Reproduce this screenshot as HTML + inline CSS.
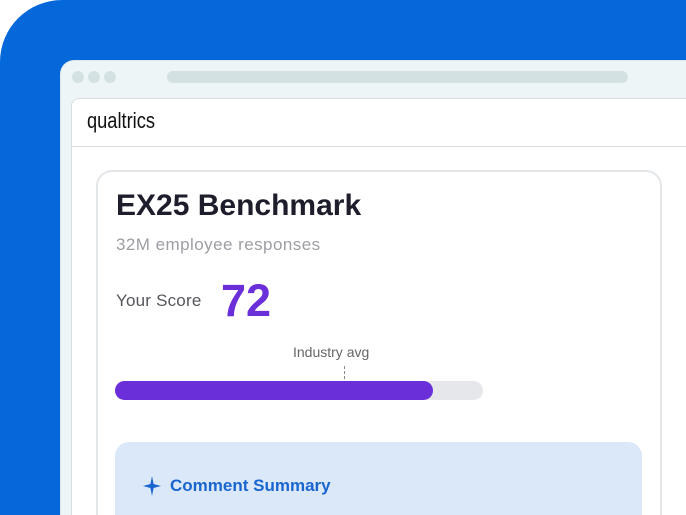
<!DOCTYPE html>
<html style="width:686px;height:515px;overflow:hidden"><head><style>
*{margin:0;padding:0;box-sizing:border-box}
body{width:686px;height:515px;overflow:hidden;background:#fff;position:relative;font-family:"Liberation Sans",Arial,sans-serif}
.bg{position:absolute;left:0;top:0;width:686px;height:515px;background:#0468DB;border-top-left-radius:62px}
.frame{position:absolute;left:60px;top:60px;width:626px;height:455px;background:#EDF5F7;border-top-left-radius:14px;border:1px solid #dde8ea;border-right:none;border-bottom:none}
.dot{position:absolute;top:10px;width:12px;height:12px;border-radius:50%;background:#D3E1E3}
.addr{position:absolute;left:106px;top:10px;width:461px;height:12px;border-radius:6px;background:#D3E1E3}
.win{position:absolute;left:71px;top:98px;width:615px;height:417px;background:#fff;border:1px solid #d6dee0;border-top-left-radius:8px;border-right:none;border-bottom:none}
.hdr{position:absolute;left:0;top:0;right:0;height:48px;border-bottom:1px solid #d6dee0}
.logo{position:absolute;left:15px;top:9px;font-size:22px;color:#111;transform:scaleX(0.83);transform-origin:left}
.card{position:absolute;left:96px;top:170px;width:566px;height:345px;border:2px solid #e4e7ea;border-bottom:none;border-radius:16px 16px 0 0;background:#fff}
.t{position:absolute;font-family:"Liberation Sans",Arial,sans-serif;white-space:nowrap}
</style></head><body>
<div class="bg"></div>
<div class="frame">
<div class="dot" style="left:11px"></div><div class="dot" style="left:27px"></div><div class="dot" style="left:43px"></div>
<div class="addr"></div>
</div>
<div class="win"><div class="hdr"><div class="logo">qualtrics</div></div></div>
<div class="card"></div>
<div class="t" style="left:116px;top:189px;font-size:30px;font-weight:bold;color:#1d1d2c">EX25 Benchmark</div>
<div class="t" style="left:116px;top:235px;font-size:17px;color:#9c9ea4;letter-spacing:0.45px">32M employee responses</div>
<div class="t" style="left:116px;top:291px;font-size:17px;color:#55575c;letter-spacing:0.2px">Your Score</div>
<div class="t" style="left:221px;top:275px;font-size:45px;font-weight:bold;color:#6A2FD8">72</div>
<div class="t" style="left:293px;top:344px;font-size:14px;color:#666">Industry avg</div>
<div style="position:absolute;left:344px;top:366px;height:13px;border-left:1px dashed #888"></div>
<div style="position:absolute;left:115px;top:381px;width:368px;height:19px;border-radius:10px;background:#E5E7EA"></div>
<div style="position:absolute;left:115px;top:381px;width:318px;height:19px;border-radius:10px;background:#6A2FD8"></div>
<div style="position:absolute;left:115px;top:442px;width:527px;height:73px;border-radius:14px 14px 0 0;background:#DAE8FA"></div>
<svg style="position:absolute;left:143px;top:476px" width="18" height="20" viewBox="0 0 18 20"><path d="M9 0 L10.6 8 L18 10 L10.6 12 L9 20 L7.4 12 L0 10 L7.4 8 Z" fill="#1a66cf"/></svg>
<div class="t" style="left:170px;top:476px;font-size:17px;font-weight:bold;color:#1A66CF">Comment Summary</div>
</body></html>
